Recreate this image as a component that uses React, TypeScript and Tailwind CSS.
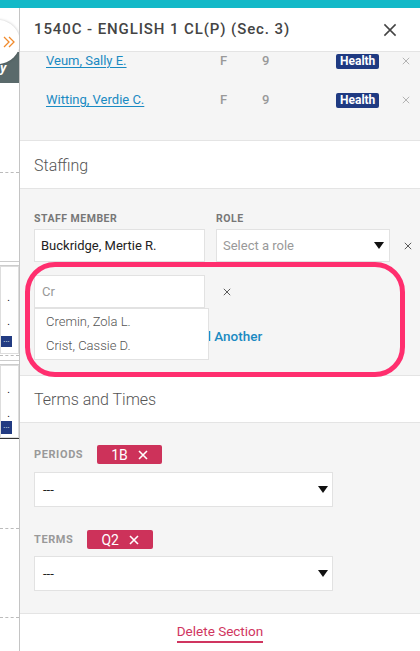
import React from 'react';

const students = [
  { name: 'Veum, Sally E.', gender: 'F', grade: '9', tag: 'Health' },
  { name: 'Witting, Verdie C.', gender: 'F', grade: '9', tag: 'Health' },
];

function XIcon({ className }: { className?: string }) {
  return (
    <svg viewBox="0 0 10 10" className={className} fill="none" stroke="currentColor" strokeWidth="1.1">
      <path d="M1 1 L9 9 M9 1 L1 9" />
    </svg>
  );
}

function Caret() {
  return (
    <svg viewBox="0 0 10 8" className="w-[10px] h-[8px]" fill="#111">
      <path d="M0 0 H10 L5 7 Z" />
    </svg>
  );
}

function Chip({ label }: { label: string }) {
  return (
    <span className="inline-flex items-center h-[19px] px-[14px] gap-[10px] rounded-[2px] bg-[#cd325a] text-white text-[14px] leading-none">
      {label}
      <XIcon className="w-[10px] h-[10px] stroke-[1.6]" />
    </span>
  );
}

function BackgroundStrip() {
  return (
    <div className="relative w-[19px] shrink-0 overflow-hidden bg-white">
      <div className="absolute left-[-24px] top-[12px] w-[44px] h-[44px] rounded-full bg-white shadow-[0_0_3px_rgba(0,0,0,0.25)] flex items-center justify-end pr-[4px]">
        <svg viewBox="0 0 14 14" className="w-[14px] h-[14px]" fill="none" stroke="#f08a2c" strokeWidth="1.3">
          <path d="M2 2 L7 7 L2 12 M7 2 L12 7 L7 12" />
        </svg>
      </div>
      <div className="h-[44px]" />
      <div className="h-[31px] bg-[#5a6a6b] flex items-center pl-[0px] text-white text-[13px] font-bold italic">
        y
      </div>
      <div className="h-[89px]" />
      <div className="border-t border-dashed border-[#bbb]" />
      <div className="h-[88px]" />
      <div className="border-t border-[#ccc]" />
      <div className="h-[3px]" />
      <div className="border-t border-[#ccc]" />
      <div className="border border-[#ddd] h-[88px] flex flex-col justify-center gap-[14px] relative">
        <span className="text-[10px] leading-none text-black text-right pr-[8px]">.</span>
        <span className="text-[10px] leading-none text-black text-right pr-[8px]">.</span>
        <span className="absolute left-0 bottom-[6px] w-[11px] h-[11px] bg-[#223b82] text-white text-[8px] leading-[8px] text-center">...</span>
      </div>
      <div className="border-t border-dashed border-[#bbb] mt-[1px]" />
      <div className="h-[4px]" />
      <div className="border-t border-[#ccc]" />
      <div className="h-[3px]" />
      <div className="border-t border-[#ccc]" />
      <div className="border border-[#ddd] h-[73px] flex flex-col justify-center gap-[14px] relative">
        <span className="text-[10px] leading-none text-black text-right pr-[8px]">.</span>
        <span className="text-[10px] leading-none text-black text-right pr-[8px]">.</span>
        <span className="absolute left-0 bottom-[3px] w-[11px] h-[13px] bg-[#223b82] text-white text-[8px] leading-[10px] text-center">...</span>
      </div>
      <div className="border-t border-[#333]" />
      <div className="h-[89px]" />
      <div className="border-t border-dashed border-[#bbb]" />
      <div className="h-[88px]" />
      <div className="border-t border-dashed border-[#bbb]" />
    </div>
  );
}

export default function App() {
  return (
    <div
      className="relative w-[420px] h-[651px] overflow-hidden bg-white flex flex-col"
      style={{ fontFamily: 'Roboto, "Liberation Sans", sans-serif' }}
    >
      <div className="h-[8px] bg-[#13b9c8] shrink-0" />
      <div className="flex flex-1 min-h-0">
        <BackgroundStrip />
        <div className="flex-1 flex flex-col border-l border-[#c4c4c4] bg-white min-w-0">
          {/* header */}
          <div className="h-[44px] shrink-0 flex items-center justify-between pl-[14px] pr-[23px] border-b border-[#e4e4e4]">
            <h2 className="text-[15px] font-medium text-[#444] tracking-[0.9px]">1540C - ENGLISH 1 CL(P) (Sec. 3)</h2>
            <XIcon className="w-[14px] h-[14px] text-[#444]" />
          </div>

          {/* body */}
          <div className="flex-1 min-h-0 overflow-hidden relative">
            <div className="-mt-[11px]">
              <div className="bg-[#f5f5f5] pb-[21px] border-b border-[#e4e4e4]">
                {students.map((s) => (
                  <div key={s.name} className="h-[39px] flex items-center pl-[26px] text-[13px]">
                    <a className="w-[174px] text-[#1a8ac2] underline underline-offset-2">{s.name}</a>
                    <span className="w-[42px] text-[#999] font-medium">{s.gender}</span>
                    <span className="w-[74px] text-[#999] font-medium">{s.grade}</span>
                    <span className="w-[66px]">
                      <span className="inline-block h-[15px] px-[4px] rounded-[2px] bg-[#1f3a82] text-white text-[12px] font-bold leading-[15px]">
                        {s.tag}
                      </span>
                    </span>
                    <XIcon className="w-[8px] h-[8px] text-[#aaa]" />
                  </div>
                ))}
              </div>

              <div className="h-[48px] flex items-center pl-[14px] pt-[2px] border-b border-[#e4e4e4] text-[16px] font-light text-[#555]">
                Staffing
              </div>

              <div className="bg-[#f5f5f5] pt-[24px] pb-[29px] px-[14px] border-b border-[#e4e4e4]">
                <div className="flex">
                  <div className="w-[171px] shrink-0">
                    <div className="text-[10.5px] font-bold text-[#777] tracking-[0.5px] leading-[12px]">STAFF MEMBER</div>
                    <div className="mt-[4px] h-[33px] bg-white border border-[#e2e2e2] flex items-center px-[6px] text-[13px] text-[#222]">
                      Buckridge, Mertie R.
                    </div>
                  </div>
                  <div className="w-[174px] shrink-0 ml-[11px]">
                    <div className="text-[10.5px] font-bold text-[#777] tracking-[0.5px] leading-[12px]">ROLE</div>
                    <div className="mt-[4px] h-[33px] bg-white border border-[#e2e2e2] flex items-center justify-between pl-[6px] pr-[5px] text-[13px] text-[#999]">
                      Select a role
                      <Caret />
                    </div>
                  </div>
                  <div className="flex shrink-0 items-end pl-[14px] pb-[12px]">
                    <XIcon className="w-[8px] h-[8px] text-[#444]" />
                  </div>
                </div>

                <div className="flex mt-[13px] relative">
                  <div className="w-[171px] shrink-0 relative">
                    <div className="h-[33px] bg-white border border-[#e2e2e2] flex items-center px-[7px] text-[13px] text-[#999]">
                      Cr
                    </div>
                    <div className="absolute z-10 left-0 top-[33px] w-[175px] bg-white border border-[#e2e2e2] py-[1px] text-[13px] text-[#555] font-light">
                      <div className="h-[24px] flex items-center pl-[11px]">Cremin, Zola L.</div>
                      <div className="h-[24px] flex items-center pl-[11px]">Crist, Cassie D.</div>
                    </div>
                  </div>
                  <div className="flex items-center pl-[18px]">
                    <XIcon className="w-[8px] h-[8px] text-[#444]" />
                  </div>
                </div>

                <div className="mt-[18px] text-center pl-[9px] text-[13.5px] font-medium text-[#1a8ac2]">Add Another</div>
              </div>

              <div className="h-[47px] flex items-center pl-[14px] pt-[2px] border-b border-[#e4e4e4] text-[16px] font-light text-[#555]">
                Terms and Times
              </div>

              <div className="bg-[#f5f5f5] pt-[22px] pb-[22px] px-[14px] border-b border-[#e4e4e4]">
                <div className="flex items-center gap-[14px]">
                  <span className="text-[11px] font-bold text-[#999] tracking-[0.6px]">PERIODS</span>
                  <Chip label="1B" />
                </div>
                <div className="mt-[8px] w-[299px] h-[35px] bg-white border border-[#e2e2e2] flex items-center justify-between pl-[8px] pr-[4px] text-[13px] text-[#222]">
                  ---
                  <Caret />
                </div>
                <div className="flex items-center gap-[14px] mt-[23px]">
                  <span className="text-[11px] font-bold text-[#999] tracking-[0.6px]">TERMS</span>
                  <Chip label="Q2" />
                </div>
                <div className="mt-[7px] w-[299px] h-[35px] bg-white border border-[#e2e2e2] flex items-center justify-between pl-[8px] pr-[4px] text-[13px] text-[#222]">
                  ---
                  <Caret />
                </div>
              </div>

              <div className="h-[37px] flex justify-center pt-[9px]">
                <span className="text-[13.5px] text-[#d03560] leading-[17px] border-b-2 border-[#d03560] h-[20px]">Delete Section</span>
              </div>
            </div>
          </div>
        </div>
      </div>

      {/* annotation ring */}
      <div className="absolute left-[25px] top-[262px] w-[380px] h-[115px] border-[5px] border-[#ff2e6e] rounded-[30px] pointer-events-none z-20" />
    </div>
  );
}
